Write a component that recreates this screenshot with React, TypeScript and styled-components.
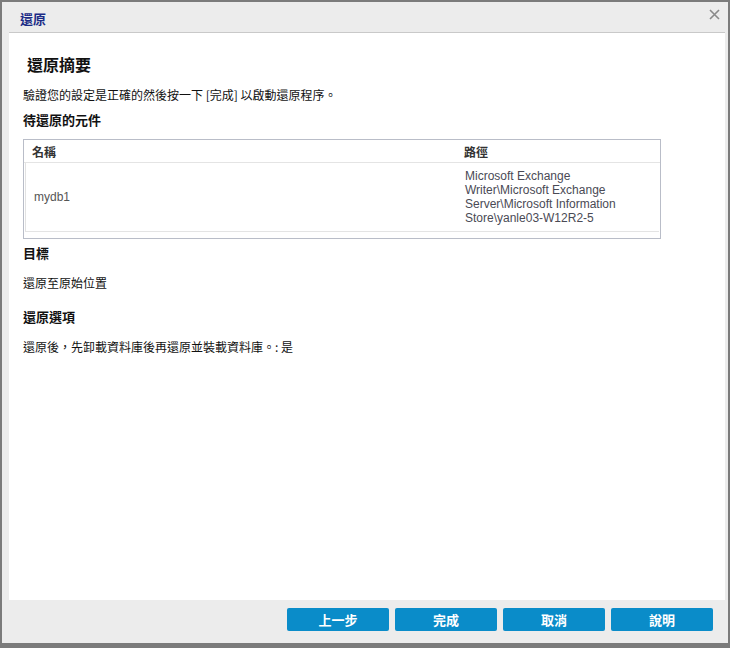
import React, {FC} from "react";
import styled, {createGlobalStyle} from 'styled-components';

const GlobalStyle = createGlobalStyle`
  html, body {
    margin: 0;
    padding: 0;
    background: #7b7b7b;
  }
  body {
    font-family: "Liberation Sans", "Noto Sans CJK TC", Arial, sans-serif;
  }
`;

const Backdrop = styled.div`
  width: 730px;
  height: 648px;
  padding: 2px 2px 0 2px;
  box-sizing: border-box;
  background: #7b7b7b;
`;

const Dialog = styled.div`
  width: 726px;
  height: 641px;
  background: #ececec;
  display: flex;
  flex-direction: column;
`;

const TitleBar = styled.div`
  height: 30px;
  display: flex;
  align-items: center;
  justify-content: space-between;
  padding: 0 8px 0 18px;
  flex: none;
`;

const Title = styled.div`
  font-family: "Noto Sans CJK TC", sans-serif;
  font-size: 13px;
  font-weight: bold;
  color: #1b2b86;
  margin-top: 3px;
`;

const CloseBtn = styled.div`
  width: 12px;
  height: 12px;
  margin-top: -6px;
  display: flex;
  align-items: center;
  justify-content: center;
`;

const Body = styled.div`
  flex: 1;
  margin: 0 3px 0 7px;
  background: #fff;
  border-top: 1px solid #c9c9c9;
  padding: 18px 14px 0 14px;
  display: flex;
  flex-direction: column;
`;

const Heading = styled.h2`
  margin: 2px 0 0 4px;
  font-family: "Noto Sans CJK TC", sans-serif;
  font-size: 16px;
  font-weight: bold;
  color: #111;
  line-height: 22px;
`;

const Text = styled.p<{top?: number}>`
  margin: ${({top}) => top ?? 0}px 0 0 0;
  font-family: "Noto Sans CJK TC", sans-serif;
  font-size: 12px;
  color: #111;
  line-height: 16px;
`;

const SectionTitle = styled.h3<{top?: number}>`
  margin: ${({top}) => top ?? 0}px 0 0 0;
  font-family: "Noto Sans CJK TC", sans-serif;
  font-size: 13px;
  font-weight: bold;
  color: #111;
  line-height: 18px;
`;

const Table = styled.div`
  margin-top: 10px;
  width: 636px;
  border: 1px solid #b9bdc8;
  padding-bottom: 6px;
  background: #fff;
`;

const HeadRow = styled.div`
  display: grid;
  grid-template-columns: 432px 1fr;
  height: 22px;
  align-items: center;
  border-bottom: 1px solid #e4e4e4;
`;

const HeadCell = styled.div`
  font-family: "Noto Sans CJK TC", sans-serif;
  font-size: 12px;
  font-weight: bold;
  color: #333;
  padding-left: 8px;
`;

const DataRow = styled.div`
  display: grid;
  grid-template-columns: 432px 1fr;
  min-height: 68px;
  align-items: center;
  border-left: 1px solid #e2e2e2;
  border-bottom: 1px solid #e4e4e4;
  margin-left: 1px;
  margin-right: 1px;
`;

const DataCell = styled.div`
  font-family: "Liberation Sans", Arial, sans-serif;
  font-size: 12px;
  color: #555;
  padding-left: 8px;
  line-height: 14px;
`;

const PathCell = styled(DataCell)`
  color: #4a4a55;
  width: 165px;
  padding-left: 7px;
`;

const Footer = styled.div`
  height: 43px;
  flex: none;
  display: flex;
  justify-content: flex-end;
  align-items: flex-start;
  gap: 6px;
  padding: 8px 15px 0 0;
  box-sizing: border-box;
`;

const Button = styled.button`
  width: 102px;
  height: 23px;
  border: none;
  border-radius: 2px;
  background: #0a8cc9;
  color: #fff;
  font-family: "Noto Sans CJK TC", sans-serif;
  font-size: 13px;
  font-weight: bold;
  padding: 0;
  cursor: pointer;
`;

const App: FC = () => {
  return (
    <Backdrop>
      <GlobalStyle/>
      <Dialog>
        <TitleBar>
          <Title>還原</Title>
          <CloseBtn>
            <svg width="11" height="11" viewBox="0 0 11 11">
              <path d="M1 1L10 10M10 1L1 10" stroke="#8a8a8a" strokeWidth="1.6"/>
            </svg>
          </CloseBtn>
        </TitleBar>
        <Body>
          <Heading>還原摘要</Heading>
          <Text top={12}>驗證您的設定是正確的然後按一下 [完成] 以啟動還原程序。</Text>
          <SectionTitle top={8}>待還原的元件</SectionTitle>
          <Table>
            <HeadRow>
              <HeadCell>名稱</HeadCell>
              <HeadCell>路徑</HeadCell>
            </HeadRow>
            <DataRow>
              <DataCell>mydb1</DataCell>
              <PathCell>
                Microsoft Exchange Writer\Microsoft Exchange Server\Microsoft Information Store\yanle03-W12R2-5
              </PathCell>
            </DataRow>
          </Table>
          <SectionTitle top={5}>目標</SectionTitle>
          <Text top={13}>還原至原始位置</Text>
          <SectionTitle top={17}>還原選項</SectionTitle>
          <Text top={13}>還原後，先卸載資料庫後再還原並裝載資料庫。: 是</Text>
        </Body>
        <Footer>
          <Button>上一步</Button>
          <Button>完成</Button>
          <Button>取消</Button>
          <Button>說明</Button>
        </Footer>
      </Dialog>
    </Backdrop>
  );
};

export default App;
